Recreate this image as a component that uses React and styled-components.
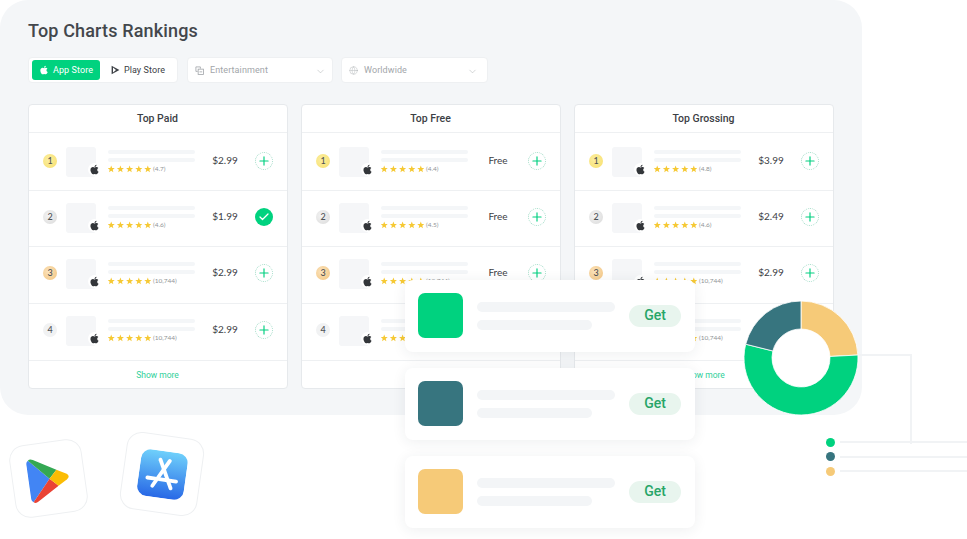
import React from "react";
import styled, { createGlobalStyle } from "styled-components";
import { FaApple } from "react-icons/fa";
import { ChevronDown, Globe, Plus, Check } from "lucide-react";

const Global = createGlobalStyle`
  html, body { margin: 0; padding: 0; background: #fff; }
  body { font-family: Roboto, "Liberation Sans", sans-serif; overflow: hidden; }
`;

const Page = styled.div`
  position: relative;
  width: 967px;
  height: 539px;
  overflow: hidden;
  background: #fff;
`;
const Panel = styled.section`
  box-sizing: border-box;
  width: 862px;
  height: 415px;
  padding: 20px 28px 0;
  background: #f4f6f8;
  border-radius: 28px;
`;
const Title = styled.h1`
  margin: 0;
  font: 500 18px/22px Roboto, sans-serif;
  letter-spacing: 0.15px;
  color: #43474c;
`;
const Toolbar = styled.div`
  display: flex;
  margin-top: 15px;
  height: 26px;
`;
const Tabs = styled.div`
  box-sizing: border-box;
  width: 150px;
  display: flex;
  align-items: center;
  padding: 3px 4px;
  background: #fff;
  border: 1px solid #eef0f2;
  border-radius: 4px;
`;
const Tab = styled.div`
  display: flex;
  align-items: center;
  justify-content: center;
  gap: 4px;
  width: ${(p) => (p.$active ? "70px" : "72px")};
  height: 20px;
  margin-left: ${(p) => (p.$active ? "-1px" : "3px")};
  border-radius: 3px;
  background: ${(p) => (p.$active ? "#00d27f" : "transparent")};
  color: ${(p) => (p.$active ? "#fff" : "#3c4045")};
  font: 400 9px/12px Roboto, sans-serif;
  letter-spacing: 0.1px;
`;
const Select = styled.div`
  box-sizing: border-box;
  width: ${(p) => p.$w}px;
  margin-left: ${(p) => p.$gap}px;
  display: flex;
  align-items: center;
  padding: 0 ${(p) => p.$pr}px 0 7px;
  gap: 6px;
  background: #fff;
  border: 1px solid #eef0f2;
  border-radius: 4px;
  color: #a2a6aa;
  font: 400 9px/12px Roboto, sans-serif;
  letter-spacing: 0.1px;
  svg:last-child {
    margin-top: 3px;
  }
`;
const SelectLabel = styled.span`
  flex: 1;
  margin-top: -1px;
`;
const Columns = styled.div`
  display: flex;
  gap: 13px;
  margin-top: 21px;
`;
const Card = styled.div`
  box-sizing: border-box;
  width: 260px;
  height: 285px;
  background: #fff;
  border: 1px solid #e6e9ec;
  border-radius: 4px;
`;
const CardHead = styled.div`
  box-sizing: border-box;
  height: 28px;
  display: flex;
  align-items: center;
  justify-content: center;
  border-bottom: 1px solid #eef0f2;
  padding-right: 1px;
  font: 500 10.5px/14px Roboto, sans-serif;
  color: #3c4045;
`;
const Row = styled.div`
  box-sizing: border-box;
  height: ${(p) => p.$h}px;
  padding: ${(p) => p.$pt}px 0 0 14px;
  display: flex;
  align-items: flex-start;
  border-bottom: 1px solid #eef0f2;
`;
const Rank = styled.div`
  width: 14px;
  height: 14px;
  margin-top: 7px;
  border-radius: 50%;
  display: flex;
  align-items: center;
  justify-content: center;
  background: ${(p) => p.$bg};
  color: #505357;
  font: 500 9px/14px Lato, sans-serif;
`;
const Thumb = styled.div`
  position: relative;
  width: 30px;
  height: 30px;
  margin-left: 9px;
  background: #f5f6f8;
  border-radius: 3px;
`;
const AppleBadge = styled.div`
  position: absolute;
  right: -5px;
  bottom: 1px;
  width: 13px;
  height: 13px;
  display: flex;
  align-items: center;
  justify-content: center;
  background: #fff;
  border-radius: 50%;
  color: #33363a;
  font-size: 11px;
`;
const Info = styled.div`
  width: 87px;
  margin: 3px 0 0 12px;
  display: flex;
  flex-direction: column;
  gap: 4px;
`;
const Bar = styled.div`
  height: 4px;
  border-radius: 2px;
  background: #f4f6f8;
`;
const Rating = styled.div`
  display: flex;
  align-items: center;
  height: 8px;
  margin-top: -1px;
  gap: 2px;
  font: 400 6.5px/8px Lato, sans-serif;
  color: #909396;
  white-space: nowrap;
`;
const Stars = styled.svg`
  width: 43px;
  height: 8px;
  flex: none;
`;
const Price = styled.div`
  width: 50px;
  margin: 6px 0 0 5px;
  text-align: center;
  font: 400 10px/14px Lato, sans-serif;
  color: #3c4045;
`;
const AddButton = styled.div`
  box-sizing: border-box;
  width: 18px;
  height: 18px;
  margin: 5px 0 0 5px;
  border-radius: 50%;
  display: flex;
  align-items: center;
  justify-content: center;
  border: ${(p) => (p.$done ? "none" : "1px dotted #9fdcc6")};
  background: ${(p) => (p.$done ? "#00d27f" : "#fff")};
  color: ${(p) => (p.$done ? "#fff" : "#00cf80")};
`;
const ShowMore = styled.div`
  height: 27px;
  display: flex;
  align-items: center;
  justify-content: center;
  padding-right: 1px;
  font: 400 8.5px/12px Roboto, sans-serif;
  color: #2fd09a;
`;
const FloatStack = styled.div`
  position: absolute;
  left: 405px;
  top: 280px;
  width: 290px;
  display: flex;
  flex-direction: column;
  gap: 16px;
`;
const FloatCard = styled.div`
  box-sizing: border-box;
  height: 72px;
  padding: 13px 14px 14px 13px;
  display: flex;
  align-items: center;
  background: #fff;
  border-radius: 8px;
  box-shadow: 0 2px 14px rgba(40, 50, 60, 0.08);
`;
const Swatch = styled.div`
  width: 45px;
  height: 45px;
  border-radius: 7px;
  background: ${(p) => p.$c};
  flex: none;
`;
const FloatText = styled.div`
  width: 138px;
  margin-left: 14px;
  display: flex;
  flex-direction: column;
  gap: 8px;
`;
const FloatBar = styled.div`
  height: 10px;
  width: ${(p) => p.$w}px;
  border-radius: 5px;
  background: #f3f5f7;
`;
const GetButton = styled.div`
  box-sizing: border-box;
  width: 52px;
  height: 22px;
  margin-left: auto;
  padding-bottom: 1px;
  border-radius: 11px;
  display: flex;
  align-items: center;
  justify-content: center;
  background: #e8f5ee;
  color: #27a567;
  font: 500 14px/20px Roboto, sans-serif;
`;
const Donut = styled.svg`
  position: absolute;
  left: 743px;
  top: 300px;
  width: 116px;
  height: 116px;
`;
const Connector = styled.div`
  position: absolute;
  left: 858px;
  top: 354px;
  width: 52px;
  height: 88px;
  border-top: 2px solid #f1f3f5;
  border-right: 2px solid #f1f3f5;
`;
const Legend = styled.div`
  position: absolute;
  left: 826px;
  top: 437.5px;
  width: 141px;
  display: flex;
  flex-direction: column;
  gap: 5.5px;
`;
const LegendRow = styled.div`
  display: flex;
  align-items: center;
  gap: 5px;
`;
const Dot = styled.div`
  width: 9px;
  height: 9px;
  border-radius: 50%;
  background: ${(p) => p.$c};
  flex: none;
`;
const LegendLine = styled.div`
  flex: 1;
  height: 2px;
  background: #f1f3f5;
`;
const Tile = styled.div`
  position: absolute;
  left: ${(p) => p.$x}px;
  top: ${(p) => p.$y}px;
  width: ${(p) => p.$s}px;
  height: ${(p) => p.$s}px;
  transform: rotate(${(p) => p.$r}deg);
  box-sizing: border-box;
  display: flex;
  align-items: center;
  justify-content: center;
  background: #fff;
  border: 1px solid #eef0f2;
  border-radius: 15px;
`;

const badge = {
  1: "radial-gradient(circle at 40% 40%, #fbeea0, #f8df6c)",
  2: "radial-gradient(circle at 40% 40%, #f4f4f4, #d9d9d9)",
  3: "radial-gradient(circle at 40% 40%, #fbe3bd, #f2c37c)",
  4: "#f1f2f3",
};
const heights = [
  [58, 14],
  [56, 12],
  [57, 12],
  [57, 12],
];
const columns = [
  {
    title: "Top Paid",
    rows: [
      ["$2.99", "(4.7)"],
      ["$1.99", "(4.6)", true],
      ["$2.99", "(10,744)"],
      ["$2.99", "(10,744)"],
    ],
  },
  {
    title: "Top Free",
    rows: [
      ["Free", "(4.4)"],
      ["Free", "(4.5)"],
      ["Free", "(10,744)"],
      ["Free", "(10,744)"],
    ],
  },
  {
    title: "Top Grossing",
    rows: [
      ["$3.99", "(4.8)"],
      ["$2.49", "(4.6)"],
      ["$2.99", "(10,744)"],
      ["$2.99", "(10,744)"],
    ],
  },
];

const star = (cx) => {
  const pts = [];
  for (let i = 0; i < 10; i++) {
    const r = i % 2 ? 1.6 : 3.7;
    const a = (Math.PI / 5) * i - Math.PI / 2;
    pts.push(`${(cx + r * Math.cos(a)).toFixed(2)},${(4.2 + r * Math.sin(a)).toFixed(2)}`);
  }
  return pts.join(" ");
};
const StarRow = () => (
  <Stars viewBox="0 0 43 8">
    {[3.2, 12.4, 21.6, 30.8, 39.8].map((x) => (
      <polygon key={x} points={star(x)} fill="#f6c934" />
    ))}
  </Stars>
);

const arc = (a0, a1, R = 57, r = 29, c = 58) => {
  const p = (ang, rad) => {
    const t = ((ang - 90) * Math.PI) / 180;
    return `${(c + rad * Math.cos(t)).toFixed(2)} ${(c + rad * Math.sin(t)).toFixed(2)}`;
  };
  const large = a1 - a0 > 180 ? 1 : 0;
  return `M${p(a0, R)} A${R} ${R} 0 ${large} 1 ${p(a1, R)} L${p(a1, r)} A${r} ${r} 0 ${large} 0 ${p(a0, r)} Z`;
};

const CategoryIcon = () => (
  <svg width="9" height="9" viewBox="0 0 10 10" fill="none" stroke="#a2a6aa" strokeWidth="0.9">
    <path d="M6 3V1H1v5h2" />
    <rect x="3.5" y="3.5" width="6" height="6" />
    <path d="M5 6.5h3" />
  </svg>
);
const PlayGlyph = () => (
  <svg width="9" height="10" viewBox="0 0 9 10" fill="#3c4045">
    <path d="M0.6 0.8 8.4 5 0.6 9.2Z" />
    <path d="M2 2.5 5 5 2 7.5Z" fill="#fff" />
  </svg>
);
const GooglePlay = () => (
  <svg width="42" height="46" viewBox="0 0 41 46">
    <path d="M2 2 21 23 2 44C.6 43 0 42 0 40V6C0 4 .6 3 2 2Z" fill="#4285f4" />
    <path d="M2 2C3.4.8 5 .8 7 2L29 15 21 23Z" fill="#34a853" />
    <path d="M2 44 21 23 29 31 7 44C5 45.2 3.4 45.2 2 44Z" fill="#ea4335" />
    <path d="M29 15 38 20C41 22 41 24 38 26L29 31 21 23Z" fill="#fbbc04" />
  </svg>
);
const AppStore = () => (
  <svg width="47" height="47" viewBox="0 0 47 47">
    <defs>
      <linearGradient id="as" x1="0" y1="0" x2="0" y2="1">
        <stop offset="0" stopColor="#6fd0fb" />
        <stop offset="1" stopColor="#2868e6" />
      </linearGradient>
    </defs>
    <rect width="47" height="47" rx="10" fill="url(#as)" />
    <g stroke="#fff" strokeWidth="3.8" strokeLinecap="round" fill="none">
      <path d="M29 9 15 36" />
      <path d="M19.5 9 33.5 36" />
      <path d="M9 28.5H17" />
      <path d="M21 28.5H38" />
    </g>
  </svg>
);

export default function App() {
  return (
    <Page>
      <Global />
      <Panel>
        <Title>Top Charts Rankings</Title>
        <Toolbar>
          <Tabs>
            <Tab $active>
              <FaApple size={10} />
              App Store
            </Tab>
            <Tab>
              <PlayGlyph />
              Play Store
            </Tab>
          </Tabs>
          <Select $w={146} $gap={9} $pr={6}>
            <CategoryIcon />
            <SelectLabel>Entertainment</SelectLabel>
            <ChevronDown size={11} strokeWidth={1} />
          </Select>
          <Select $w={147} $gap={8} $pr={9}>
            <Globe size={9} strokeWidth={1} />
            <SelectLabel>Worldwide</SelectLabel>
            <ChevronDown size={11} strokeWidth={1} />
          </Select>
        </Toolbar>
        <Columns>
          {columns.map((col) => (
            <Card key={col.title}>
              <CardHead>{col.title}</CardHead>
              {col.rows.map(([price, count, done], i) => (
                <Row key={i} $h={heights[i][0]} $pt={heights[i][1]}>
                  <Rank $bg={badge[i + 1]}>{i + 1}</Rank>
                  <Thumb>
                    <AppleBadge>
                      <FaApple />
                    </AppleBadge>
                  </Thumb>
                  <Info>
                    <Bar />
                    <Bar />
                    <Rating>
                      <StarRow />
                      {count}
                    </Rating>
                  </Info>
                  <Price>{price}</Price>
                  <AddButton $done={done}>
                    {done ? <Check size={12} strokeWidth={2.5} /> : <Plus size={14} strokeWidth={2} />}
                  </AddButton>
                </Row>
              ))}
              <ShowMore>Show more</ShowMore>
            </Card>
          ))}
        </Columns>
      </Panel>

      <Tile $x={11.5} $y={441.5} $s={73} $r={-8}>
        <GooglePlay />
      </Tile>
      <Tile $x={122.5} $y={434.5} $s={78} $r={8}>
        <AppStore />
      </Tile>

      <FloatStack>
        {["#00d27f", "#37757f", "#f6ca78"].map((c) => (
          <FloatCard key={c}>
            <Swatch $c={c} />
            <FloatText>
              <FloatBar $w={138} />
              <FloatBar $w={115} />
            </FloatText>
            <GetButton>Get</GetButton>
          </FloatCard>
        ))}
      </FloatStack>

      <Connector />
      <Donut viewBox="0 0 116 116">
        <circle cx="58" cy="58" r="30" fill="#fff" />
        <path d={arc(0, 87)} fill="#f6ca78" stroke="#fff" strokeWidth="0.8" />
        <path d={arc(87, 284)} fill="#00d27f" stroke="#fff" strokeWidth="0.8" />
        <path d={arc(284, 360)} fill="#37757f" stroke="#fff" strokeWidth="0.8" />
      </Donut>
      <Legend>
        {["#00d27f", "#37757f", "#f6ca78"].map((c) => (
          <LegendRow key={c}>
            <Dot $c={c} />
            <LegendLine />
          </LegendRow>
        ))}
      </Legend>
    </Page>
  );
}
